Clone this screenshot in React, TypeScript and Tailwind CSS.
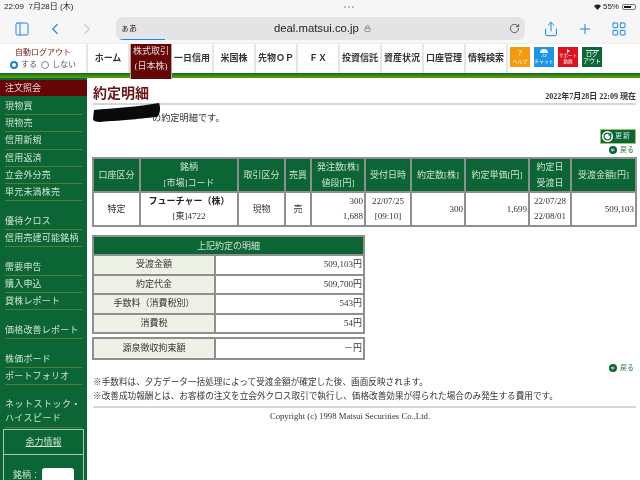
import { ChevronLeft, ChevronRight, LayoutGrid, Lock, PanelLeft, Plus, RotateCw, Share } from 'lucide-react'

const navItems = ['一日信用', '米国株', '先物ＯＰ', 'ＦＸ', '投資信託', '資産状況', '口座管理', '情報検索']

const sideGroups = [
  ['現物買', '現物売', '信用新規', '信用返済', '立会外分売', '単元未満株売'],
  ['優待クロス', '信用売建可能銘柄'],
  ['需要申告', '購入申込', '貸株レポート'],
  ['価格改善レポート'],
  ['株価ボード', 'ポートフォリオ'],
]

const detailRows = [
  ['受渡金額', '509,103円'],
  ['約定代金', '509,700円'],
  ['手数料（消費税別）', '543円'],
  ['消費税', '54円'],
]

const th = 'border-2 border-[#8f8f8f] bg-[#0b6534] text-[#cfe3d3] font-normal text-center leading-[16px] p-0'
const td = 'border-2 border-[#8f8f8f] leading-[15px] text-[#333]'

function BackLink() {
  return (
    <div className="flex items-center justify-end gap-[3px] pr-[2px] text-[7px] leading-[10px] text-[#2f7a3f]">
      <svg width="8" height="8" viewBox="0 0 8 8">
        <circle cx="4" cy="4" r="4" fill="#0b6534" />
        <path d="M5.5 4H2.8M3.8 2.6L2.4 4l1.4 1.4" fill="none" stroke="#fff" strokeWidth="1" />
      </svg>
      戻る
    </div>
  )
}

function App() {
  return (
    <div className="relative flex h-[480px] w-[640px] flex-col overflow-hidden bg-white font-['Liberation_Serif','Noto_Sans_CJK_JP',serif] text-[9px] text-[#333] blur-[0.3px]">
      {/* safari chrome */}
      <div className="h-[43px] shrink-0 bg-[#f6f6f6] font-['Liberation_Sans','Noto_Sans_CJK_JP',sans-serif]">
        <div className="flex h-[14px] items-center justify-between px-[4px] text-[8px] text-[#222]">
          <span className="w-[100px]">22:09&nbsp;&nbsp;7月28日 (木)</span>
          <div className="flex gap-[2px]">
            <span className="h-[2px] w-[2px] rounded-full bg-[#aaa]" />
            <span className="h-[2px] w-[2px] rounded-full bg-[#aaa]" />
            <span className="h-[2px] w-[2px] rounded-full bg-[#aaa]" />
          </div>
          <div className="flex items-center gap-[2px]">
            <svg width="7" height="6" viewBox="0 0 7 6">
              <path d="M0 2a5 5 0 0 1 7 0L3.5 6z" fill="#222" />
            </svg>
            <span>55%</span>
            <div className="ml-[1px] flex h-[6px] w-[14px] items-center rounded-[2px] border border-[#777] p-[1px]">
              <div className="h-full w-[7px] bg-[#111]" />
            </div>
          </div>
        </div>
        <div className="flex h-[29px] items-center">
          <div className="flex w-[116px] shrink-0 items-center text-[#1a84f0]">
            <PanelLeft className="ml-[14px]" size={16} strokeWidth={1.5} />
            <ChevronLeft className="ml-[16px]" size={18} strokeWidth={1.5} />
            <ChevronRight className="ml-[14px] text-[#c9c9c9]" size={18} strokeWidth={1.5} />
          </div>
          <div className="relative flex h-[23px] w-[409px] shrink-0 items-center overflow-hidden rounded-[7px] bg-[#e4e4e6] pl-[5px] pr-[5px] text-[11.3px] text-[#222]">
            <span className="w-[16px] text-[8px]">ぁあ</span>
            <span className="ml-[137px] flex items-center gap-[5px]">
              deal.matsui.co.jp <Lock className="text-[#888]" size={7} strokeWidth={3} />
            </span>
            <RotateCw className="ml-auto" size={11} strokeWidth={1.5} />
            <div className="absolute bottom-0 left-0 h-[1.5px] w-[49px] bg-[#1a84f0]" />
          </div>
          <div className="ml-[18px] flex shrink-0 items-center gap-[18px] text-[#1a84f0]">
            <Share size={16} strokeWidth={1.5} />
            <Plus size={16} strokeWidth={1.5} />
            <LayoutGrid size={16} strokeWidth={1.5} />
          </div>
        </div>
      </div>

      {/* site nav */}
      <div className="flex h-[30px] shrink-0 border-t border-[#eee] bg-white">
        <div className="flex w-[88px] flex-col items-center justify-center border-r-2 border-[#e6e6e6]">
          <div className="text-[8px] leading-[12px] text-[#7a1414]">自動ログアウト</div>
          <div className="flex items-center text-[8px] leading-[12px] text-[#555]">
            <span className="mr-[3px] h-[8px] w-[8px] rounded-full border-[2.5px] border-[#1a7fe0] bg-white" />
            する
            <span className="ml-[4px] mr-[3px] h-[8px] w-[8px] rounded-full border border-[#888]" />
            しない
          </div>
        </div>
        <div className="flex w-[42px] items-center justify-center border-r-2 border-[#e6e6e6] text-[9px] font-bold">ホーム</div>
        <div className="z-10 flex h-[35px] w-[42px] flex-col items-center justify-center border-x border-[#aaa] bg-[#660505] pb-[5px] text-[9px] leading-[15px] text-[#e8d8d8]">
          <span>株式取引</span>
          <span>(日本株)</span>
        </div>
        {navItems.map((item) => (
          <div key={item} className="flex w-[42px] items-center justify-center border-r-2 border-[#e6e6e6] text-[9px] font-bold whitespace-nowrap">
            {item}
          </div>
        ))}
        <div className="ml-[2px] flex items-center gap-[4px] pb-[3px]">
          <div className="flex h-[20px] w-[20px] flex-col items-center justify-center bg-[#f59a0c] text-[5px] leading-[7px] text-white">
            <span className="text-[8px] leading-[9px]">?</span>
            ヘルプ
          </div>
          <div className="flex h-[20px] w-[20px] flex-col items-center justify-center bg-[#1c96e8] text-[5px] leading-[6px] text-white">
            <span className="h-[4px] w-[8px] rounded-t-full bg-white" />
            AI
            <span>チャット</span>
          </div>
          <div className="flex h-[20px] w-[20px] flex-col items-center justify-center bg-[#e0101e] text-[4.5px] leading-[6px] text-white">
            <span className="h-0 w-0 border-y-[2px] border-l-[3px] border-y-transparent border-l-white" />
            サポート
            <span>動画</span>
          </div>
          <div className="flex h-[20px] w-[20px] flex-col items-center justify-center bg-[#0d6a38] text-[6px] leading-[7px] text-white">
            <span className="h-[1px] w-[13px] bg-white" />
            ログ
            <span>アウト</span>
          </div>
        </div>
      </div>
      <div className="h-[5px] shrink-0 bg-[linear-gradient(#0b6534_0,#2f8a10_45%,#6a9a08_100%)]" />

      <div className="flex min-h-0 flex-1 bg-white">
        {/* sidebar */}
        <div className="w-[87px] shrink-0 bg-[#0b6534] pt-[2px] text-[9px] leading-[17px] text-[#cfe3d3]">
          <div className="mb-[2px] h-[16px] bg-[#660505] pl-[5px] text-[#e8d8d8]">注文照会</div>
          {sideGroups.map((group) => (
            <div key={group[0]} className="pb-[11.6px]">
              {group.map((item) => (
                <div key={item} className="mx-[5px] h-[17.2px] whitespace-nowrap border-b border-[#4d7f3c] tracking-[0.2px]">
                  {item}
                </div>
              ))}
            </div>
          ))}
          <div className="mx-[5px] h-[31px] whitespace-nowrap border-b border-[#4d7f3c] leading-[14px] tracking-[0.5px]">
            ネットストック・
            <br />
            ハイスピード
          </div>
          <div className="mx-[3px] mt-[1px] border border-[#a9c8ae]">
            <div className="h-[25px] border-b border-[#a9c8ae] text-center leading-[25px] underline">余力情報</div>
            <div className="flex items-start gap-[2px] pl-[9px] pt-[13px]">
              <span className="leading-[14px]">銘柄：</span>
              <div className="h-[18px] w-[32px] rounded-[3px] bg-white" />
            </div>
          </div>
        </div>

        {/* main */}
        <div className="relative min-w-0 flex-1 pl-[6px] pr-[4px]">
          <div className="flex h-[27px] items-end justify-between border-b-2 border-[#d5d5d5]">
            <h1 className="text-[14px] leading-[18px] font-bold text-[#6b1414]">約定明細</h1>
            <span className="pb-[1px] text-[8px] font-bold leading-[10px] text-[#333]">2022年7月28日 22:09 現在</span>
          </div>
          <p className="h-[24px] pl-[59px] pt-[7px] text-[9.2px] leading-[12px]">の約定明細です。</p>
          <svg className="absolute left-[6px] top-[25px]" width="68" height="20" viewBox="0 0 68 20">
            <path d="M1 7C20 5 45 4 66 0c2 5 1 12-2 14-20 2-40 4-46 4-10 1-17 2-18-2z" fill="#0a0a0a" />
          </svg>
          <div className="flex justify-end">
            <div className="flex h-[15px] w-[36px] items-center border border-[#9cc76a] bg-[#0b6534] pl-[1px] text-[7px] tracking-[1px] text-[#cfe3d3]">
              <RotateCw className="mr-[2px] rounded-full bg-white p-[1px] text-[#0b6534]" size={11} strokeWidth={3.5} />
              更新
            </div>
          </div>
          <div className="mt-[1px] mb-[2px]">
            <BackLink />
          </div>

          <table className="-ml-[1px] w-[543px] table-fixed border-collapse text-[9px]">
            <colgroup>
              <col className="w-[47px]" />
              <col className="w-[98px]" />
              <col className="w-[47px]" />
              <col className="w-[26px]" />
              <col className="w-[54px]" />
              <col className="w-[46px]" />
              <col className="w-[54px]" />
              <col className="w-[64px]" />
              <col className="w-[42px]" />
              <col className="w-[65px]" />
            </colgroup>
            <thead>
              <tr className="h-[34px]">
                <th className={th}>口座区分</th>
                <th className={th}>
                  銘柄
                  <br />
                  [市場]コード
                </th>
                <th className={th}>取引区分</th>
                <th className={th}>売買</th>
                <th className={th}>
                  発注数[株]
                  <br />
                  値段[円]
                </th>
                <th className={th}>受付日時</th>
                <th className={th}>約定数[株]</th>
                <th className={th}>約定単価[円]</th>
                <th className={th}>
                  約定日
                  <br />
                  受渡日
                </th>
                <th className={th}>受渡金額[円]</th>
              </tr>
            </thead>
            <tbody>
              <tr className="h-[34px]">
                <td className={`${td} text-center`}>特定</td>
                <td className={`${td} text-center`}>
                  <b className="text-[#222]">フューチャー（株）</b>
                  <br />
                  [東]4722
                </td>
                <td className={`${td} text-center`}>現物</td>
                <td className={`${td} text-center`}>売</td>
                <td className={`${td} pr-[1px] text-right`}>
                  300
                  <br />
                  1,688
                </td>
                <td className={`${td} text-center`}>
                  22/07/25
                  <br />
                  [09:10]
                </td>
                <td className={`${td} pr-[1px] text-right`}>300</td>
                <td className={`${td} pr-[1px] text-right`}>1,699</td>
                <td className={`${td} text-center`}>
                  22/07/28
                  <br />
                  22/08/01
                </td>
                <td className={`${td} pr-[1px] text-right`}>509,103</td>
              </tr>
            </tbody>
          </table>

          <table className="-ml-[1px] mt-[8px] w-[271px] table-fixed border-collapse text-[9px]">
            <colgroup>
              <col className="w-[122px]" />
              <col className="w-[149px]" />
            </colgroup>
            <thead>
              <tr className="h-[19px]">
                <th colSpan={2} className={th}>
                  上記約定の明細
                </th>
              </tr>
            </thead>
            <tbody>
              {detailRows.map(([label, value]) => (
                <tr key={label} className="h-[19.5px]">
                  <td className={`${td} bg-[#eef1e6] text-center`}>{label}</td>
                  <td className={`${td} pr-[1px] text-right`}>{value}</td>
                </tr>
              ))}
            </tbody>
          </table>
          <table className="-ml-[1px] mt-[3px] w-[271px] table-fixed border-collapse text-[9px]">
            <colgroup>
              <col className="w-[122px]" />
              <col className="w-[149px]" />
            </colgroup>
            <tbody>
              <tr className="h-[21px]">
                <td className={`${td} bg-[#eef1e6] text-center`}>源泉徴収拘束額</td>
                <td className={`${td} pr-[1px] text-right`}>－円</td>
              </tr>
            </tbody>
          </table>

          <div className="mt-[3px]">
            <BackLink />
          </div>
          <div className="mt-[2px] border-b-2 border-[#d5d5d5] pb-[3px] text-[8.65px] leading-[14px] whitespace-nowrap">
            <p>※手数料は、夕方データ一括処理によって受渡金額が確定した後、画面反映されます。</p>
            <p>※改善成功報酬とは、お客様の注文を立会外クロス取引で執行し、価格改善効果が得られた場合のみ発生する費用です。</p>
          </div>
          <p className="w-[514px] pt-[2px] text-center text-[8.7px] leading-[12px]">Copyright (c) 1998 Matsui Securities Co.,Ltd.</p>
        </div>
      </div>
    </div>
  )
}

export default App
